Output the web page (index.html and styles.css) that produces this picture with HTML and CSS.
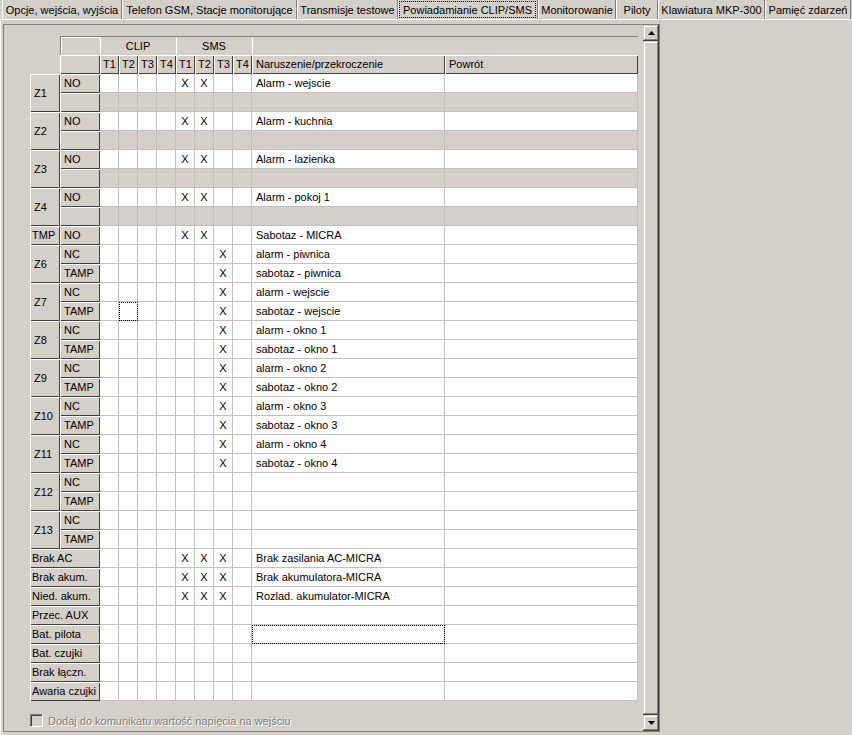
FILE: index.html
```html
<!DOCTYPE html>
<html lang="pl">
<head>
  <meta charset="UTF-8">
  <title>Powiadamianie CLIP/SMS</title>
  <link rel="stylesheet" href="styles.css">
</head>
<body>
  <div class="tabs">
    <div class="tab">Opcje, wejścia, wyjścia</div>
    <div class="tab">Telefon GSM, Stacje monitorujące</div>
    <div class="tab">Transmisje testowe</div>
    <div class="tab sel"><span>Powiadamianie CLIP/SMS</span></div>
    <div class="tab">Monitorowanie</div>
    <div class="tab">Piloty</div>
    <div class="tab">Klawiatura MKP-300</div>
    <div class="tab">Pamięć zdarzeń</div>
  </div>

  <div class="page">
    <div class="frame">
      <div class="content">
        <div class="grid">
          <!-- header -->
          <div class="hd1 first"></div>
          <div class="hd1 span4">CLIP</div>
          <div class="hd1 span4">SMS</div>
          <div class="hd1 span2"></div>

          <div class="hd2 first"></div>
          <div class="hd2">T1</div><div class="hd2">T2</div><div class="hd2">T3</div><div class="hd2">T4</div>
          <div class="hd2">T1</div><div class="hd2">T2</div><div class="hd2">T3</div><div class="hd2">T4</div>
          <div class="hd2 left">Naruszenie/przekroczenie</div>
          <div class="hd2 left">Powrót</div>

          <!-- Z1 -->
          <div class="lbl zone">Z1</div>
          <div class="lbl">NO</div>
          <div class="c"></div><div class="c"></div><div class="c"></div><div class="c"></div><div class="c">X</div><div class="c">X</div><div class="c"></div><div class="c"></div>
          <div class="c t">Alarm - wejscie</div><div class="c t"></div>
          <div class="lbl"></div>
          <div class="c off"></div><div class="c off"></div><div class="c off"></div><div class="c off"></div><div class="c off"></div><div class="c off"></div><div class="c off"></div><div class="c off"></div>
          <div class="c t off"></div><div class="c t off"></div>

          <!-- Z2 -->
          <div class="lbl zone">Z2</div>
          <div class="lbl">NO</div>
          <div class="c"></div><div class="c"></div><div class="c"></div><div class="c"></div><div class="c">X</div><div class="c">X</div><div class="c"></div><div class="c"></div>
          <div class="c t">Alarm - kuchnia</div><div class="c t"></div>
          <div class="lbl"></div>
          <div class="c off"></div><div class="c off"></div><div class="c off"></div><div class="c off"></div><div class="c off"></div><div class="c off"></div><div class="c off"></div><div class="c off"></div>
          <div class="c t off"></div><div class="c t off"></div>

          <!-- Z3 -->
          <div class="lbl zone">Z3</div>
          <div class="lbl">NO</div>
          <div class="c"></div><div class="c"></div><div class="c"></div><div class="c"></div><div class="c">X</div><div class="c">X</div><div class="c"></div><div class="c"></div>
          <div class="c t">Alarm - lazienka</div><div class="c t"></div>
          <div class="lbl"></div>
          <div class="c off"></div><div class="c off"></div><div class="c off"></div><div class="c off"></div><div class="c off"></div><div class="c off"></div><div class="c off"></div><div class="c off"></div>
          <div class="c t off"></div><div class="c t off"></div>

          <!-- Z4 -->
          <div class="lbl zone">Z4</div>
          <div class="lbl">NO</div>
          <div class="c"></div><div class="c"></div><div class="c"></div><div class="c"></div><div class="c">X</div><div class="c">X</div><div class="c"></div><div class="c"></div>
          <div class="c t">Alarm - pokoj 1</div><div class="c t"></div>
          <div class="lbl"></div>
          <div class="c off"></div><div class="c off"></div><div class="c off"></div><div class="c off"></div><div class="c off"></div><div class="c off"></div><div class="c off"></div><div class="c off"></div>
          <div class="c t off"></div><div class="c t off"></div>

          <!-- TMP -->
          <div class="lbl tmp">TMP</div>
          <div class="lbl">NO</div>
          <div class="c"></div><div class="c"></div><div class="c"></div><div class="c"></div><div class="c">X</div><div class="c">X</div><div class="c"></div><div class="c"></div>
          <div class="c t">Sabotaz - MICRA</div><div class="c t"></div>

          <!-- Z6 -->
          <div class="lbl zone">Z6</div>
          <div class="lbl">NC</div>
          <div class="c"></div><div class="c"></div><div class="c"></div><div class="c"></div><div class="c"></div><div class="c"></div><div class="c">X</div><div class="c"></div>
          <div class="c t">alarm - piwnica</div><div class="c t"></div>
          <div class="lbl">TAMP</div>
          <div class="c"></div><div class="c"></div><div class="c"></div><div class="c"></div><div class="c"></div><div class="c"></div><div class="c">X</div><div class="c"></div>
          <div class="c t">sabotaz - piwnica</div><div class="c t"></div>

          <!-- Z7 -->
          <div class="lbl zone">Z7</div>
          <div class="lbl">NC</div>
          <div class="c"></div><div class="c"></div><div class="c"></div><div class="c"></div><div class="c"></div><div class="c"></div><div class="c">X</div><div class="c"></div>
          <div class="c t">alarm - wejscie</div><div class="c t"></div>
          <div class="lbl">TAMP</div>
          <div class="c"></div><div class="c focus"></div><div class="c"></div><div class="c"></div><div class="c"></div><div class="c"></div><div class="c">X</div><div class="c"></div>
          <div class="c t">sabotaz - wejscie</div><div class="c t"></div>

          <!-- Z8 -->
          <div class="lbl zone">Z8</div>
          <div class="lbl">NC</div>
          <div class="c"></div><div class="c"></div><div class="c"></div><div class="c"></div><div class="c"></div><div class="c"></div><div class="c">X</div><div class="c"></div>
          <div class="c t">alarm - okno 1</div><div class="c t"></div>
          <div class="lbl">TAMP</div>
          <div class="c"></div><div class="c"></div><div class="c"></div><div class="c"></div><div class="c"></div><div class="c"></div><div class="c">X</div><div class="c"></div>
          <div class="c t">sabotaz - okno 1</div><div class="c t"></div>

          <!-- Z9 -->
          <div class="lbl zone">Z9</div>
          <div class="lbl">NC</div>
          <div class="c"></div><div class="c"></div><div class="c"></div><div class="c"></div><div class="c"></div><div class="c"></div><div class="c">X</div><div class="c"></div>
          <div class="c t">alarm - okno 2</div><div class="c t"></div>
          <div class="lbl">TAMP</div>
          <div class="c"></div><div class="c"></div><div class="c"></div><div class="c"></div><div class="c"></div><div class="c"></div><div class="c">X</div><div class="c"></div>
          <div class="c t">sabotaz - okno 2</div><div class="c t"></div>

          <!-- Z10 -->
          <div class="lbl zone">Z10</div>
          <div class="lbl">NC</div>
          <div class="c"></div><div class="c"></div><div class="c"></div><div class="c"></div><div class="c"></div><div class="c"></div><div class="c">X</div><div class="c"></div>
          <div class="c t">alarm - okno 3</div><div class="c t"></div>
          <div class="lbl">TAMP</div>
          <div class="c"></div><div class="c"></div><div class="c"></div><div class="c"></div><div class="c"></div><div class="c"></div><div class="c">X</div><div class="c"></div>
          <div class="c t">sabotaz - okno 3</div><div class="c t"></div>

          <!-- Z11 -->
          <div class="lbl zone">Z11</div>
          <div class="lbl">NC</div>
          <div class="c"></div><div class="c"></div><div class="c"></div><div class="c"></div><div class="c"></div><div class="c"></div><div class="c">X</div><div class="c"></div>
          <div class="c t">alarm - okno 4</div><div class="c t"></div>
          <div class="lbl">TAMP</div>
          <div class="c"></div><div class="c"></div><div class="c"></div><div class="c"></div><div class="c"></div><div class="c"></div><div class="c">X</div><div class="c"></div>
          <div class="c t">sabotaz - okno 4</div><div class="c t"></div>

          <!-- Z12 -->
          <div class="lbl zone">Z12</div>
          <div class="lbl">NC</div>
          <div class="c"></div><div class="c"></div><div class="c"></div><div class="c"></div><div class="c"></div><div class="c"></div><div class="c"></div><div class="c"></div>
          <div class="c t"></div><div class="c t"></div>
          <div class="lbl">TAMP</div>
          <div class="c"></div><div class="c"></div><div class="c"></div><div class="c"></div><div class="c"></div><div class="c"></div><div class="c"></div><div class="c"></div>
          <div class="c t"></div><div class="c t"></div>

          <!-- Z13 -->
          <div class="lbl zone">Z13</div>
          <div class="lbl">NC</div>
          <div class="c"></div><div class="c"></div><div class="c"></div><div class="c"></div><div class="c"></div><div class="c"></div><div class="c"></div><div class="c"></div>
          <div class="c t"></div><div class="c t"></div>
          <div class="lbl">TAMP</div>
          <div class="c"></div><div class="c"></div><div class="c"></div><div class="c"></div><div class="c"></div><div class="c"></div><div class="c"></div><div class="c"></div>
          <div class="c t"></div><div class="c t"></div>

          <!-- awarie -->
          <div class="lbl wide">Brak AC</div>
          <div class="c"></div><div class="c"></div><div class="c"></div><div class="c"></div><div class="c">X</div><div class="c">X</div><div class="c">X</div><div class="c"></div>
          <div class="c t">Brak zasilania AC-MICRA</div><div class="c t"></div>

          <div class="lbl wide">Brak akum.</div>
          <div class="c"></div><div class="c"></div><div class="c"></div><div class="c"></div><div class="c">X</div><div class="c">X</div><div class="c">X</div><div class="c"></div>
          <div class="c t">Brak akumulatora-MICRA</div><div class="c t"></div>

          <div class="lbl wide">Nied. akum.</div>
          <div class="c"></div><div class="c"></div><div class="c"></div><div class="c"></div><div class="c">X</div><div class="c">X</div><div class="c">X</div><div class="c"></div>
          <div class="c t">Rozlad. akumulator-MICRA</div><div class="c t"></div>

          <div class="lbl wide">Przec. AUX</div>
          <div class="c"></div><div class="c"></div><div class="c"></div><div class="c"></div><div class="c"></div><div class="c"></div><div class="c"></div><div class="c"></div>
          <div class="c t"></div><div class="c t"></div>

          <div class="lbl wide">Bat. pilota</div>
          <div class="c"></div><div class="c"></div><div class="c"></div><div class="c"></div><div class="c"></div><div class="c"></div><div class="c"></div><div class="c"></div>
          <div class="c t focus"></div><div class="c t"></div>

          <div class="lbl wide">Bat. czujki</div>
          <div class="c"></div><div class="c"></div><div class="c"></div><div class="c"></div><div class="c"></div><div class="c"></div><div class="c"></div><div class="c"></div>
          <div class="c t"></div><div class="c t"></div>

          <div class="lbl wide">Brak łączn.</div>
          <div class="c"></div><div class="c"></div><div class="c"></div><div class="c"></div><div class="c"></div><div class="c"></div><div class="c"></div><div class="c"></div>
          <div class="c t"></div><div class="c t"></div>

          <div class="lbl wide">Awaria czujki</div>
          <div class="c"></div><div class="c"></div><div class="c"></div><div class="c"></div><div class="c"></div><div class="c"></div><div class="c"></div><div class="c"></div>
          <div class="c t"></div><div class="c t"></div>
        </div>

        <label class="check">
          <span class="box"></span>
          <span class="check-text">Dodaj do komunikatu wartość napięcia na wejściu</span>
        </label>
      </div>

      <div class="vscroll">
        <div class="sbtn">
          <svg width="7" height="4" viewBox="0 0 7 4"><polygon points="3.5,0 7,4 0,4" fill="#000"/></svg>
        </div>
        <div class="thumb"></div>
        <div class="sbtn">
          <svg width="7" height="4" viewBox="0 0 7 4"><polygon points="0,0 7,0 3.5,4" fill="#000"/></svg>
        </div>
      </div>
    </div>
  </div>
</body>
</html>
```

FILE: styles.css
```css
body {
  margin: 0;
  width: 852px;
  height: 735px;
  overflow: hidden;
  background-color: #d4d0c8;
  color: #000;
  font-family: "Liberation Sans", Arial, sans-serif;
  font-size: 11px;
}

/* tabs */
.tabs {
  display: flex;
  height: 19px;
  padding-left: 2px;
  border-bottom: 1px solid #fff;
}

.tab {
  box-sizing: border-box;
  display: flex;
  align-items: center;
  justify-content: center;
  border-left: 1px solid #fff;
  border-right: 1px solid #808080;
  white-space: nowrap;
}

.tab:nth-child(1) { width: 120px; }
.tab:nth-child(2) { width: 175px; }
.tab:nth-child(3) { width: 101px; }
.tab:nth-child(4) { width: 140px; }
.tab:nth-child(5) { width: 78px; }
.tab:nth-child(6) { width: 42px; }
.tab:nth-child(7) { width: 107px; }
.tab:nth-child(8) { width: 86px; }

.tab.sel {
  align-items: stretch;
  padding: 1px 1px 1px 0;
}

.tab.sel span {
  flex: 1;
  display: flex;
  align-items: center;
  justify-content: center;
  border: 1px dotted #000;
}

/* page and frame */
.page {
  box-sizing: border-box;
  height: 715px;
  padding: 4px 0 0 2px;
  border-left: 1px solid #fff;
}

.frame {
  box-sizing: border-box;
  display: flex;
  width: 657px;
  height: 708px;
  border: 1px solid #808080;
}

.content {
  flex: 1;
  padding: 11px 0 0 26px;
}

/* grid */
.grid {
  display: grid;
  grid-template-columns: 30px 40px repeat(8, 19px) 193px 193px;
  grid-auto-rows: 19px;
  width: 608px;
}

.grid > div {
  box-sizing: border-box;
  line-height: 18px;
  white-space: nowrap;
  overflow: hidden;
}

.hd1 {
  border-top: 1px solid #808080;
  box-shadow: inset 1px 0 #fff;
  text-align: center;
}

.hd1.first,
.hd2.first {
  grid-column: 2;
}

.hd1.first {
  border-left: 1px solid #808080;
  box-shadow: inset 1px 1px #fff;
}

.span4 { grid-column: span 4; }
.span2 { grid-column: span 2; }

.hd2,
.lbl {
  box-shadow: inset 1px 1px #fff, inset -1px -1px #404040;
}

.hd2 {
  text-align: center;
}

.hd2.left {
  text-align: left;
  padding-left: 4px;
}

.lbl {
  padding-left: 4px;
  line-height: 19px !important;
}

.zone {
  grid-row: span 2;
  display: flex;
  align-items: center;
}

.tmp {
  padding-left: 2px;
}

.wide {
  grid-column: span 2;
  padding-left: 2px;
}

.c {
  background-color: #fff;
  border-right: 1px solid #c0c0c0;
  border-bottom: 1px solid #c0c0c0;
  text-align: center;
}

.c.t {
  text-align: left;
  padding-left: 4px;
}

.c.off {
  background-color: #d4d0c8;
}

.focus {
  outline: 1px dotted #000;
  outline-offset: -1px;
}

/* disabled checkbox */
.check {
  display: flex;
  align-items: center;
  gap: 5px;
  margin-top: 13px;
}

.box {
  box-sizing: border-box;
  width: 13px;
  height: 13px;
  border-top: 1px solid #808080;
  border-left: 1px solid #808080;
  border-right: 1px solid #fff;
  border-bottom: 1px solid #fff;
  box-shadow: inset 1px 1px #404040;
  background-color: #d4d0c8;
}

.check-text {
  color: #808080;
  text-shadow: 1px 1px #fff;
}

/* scrollbar */
.vscroll {
  display: flex;
  flex-direction: column;
  width: 16px;
}

.sbtn,
.thumb {
  box-shadow: inset -1px -1px #404040, inset 1px 1px #d4d0c8, inset -2px -2px #808080, inset 2px 2px #fff;
}

.sbtn {
  height: 16px;
  display: flex;
  align-items: center;
  justify-content: center;
}

.thumb {
  flex: 1;
}
```
